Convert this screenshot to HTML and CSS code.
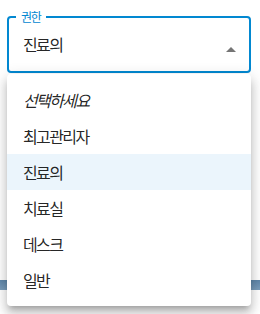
FILE: index.html
```html
<!DOCTYPE html>
<html lang="ko">
<head>
    <meta charset="UTF-8">
    <title>권한 선택</title>
    <link rel="stylesheet" href="styles.css">
</head>
<body>
    <div class="page">
        <!-- 권한 선택 필드 -->
        <fieldset class="field">
            <legend>권한</legend>
            <div class="value">진료의</div>
            <svg class="arrow" width="24" height="24" viewBox="0 0 24 24"><path d="M7 14l5-5 5 5z" fill="#757575"/></svg>
        </fieldset>

        <div class="backdrop-bar"></div>

        <!-- 드롭다운 메뉴 -->
        <ul class="menu">
            <li class="item placeholder">선택하세요</li>
            <li class="item">최고관리자</li>
            <li class="item selected">진료의</li>
            <li class="item">치료실</li>
            <li class="item">데스크</li>
            <li class="item">일반</li>
        </ul>
    </div>
</body>
</html>
```

FILE: styles.css
```css
body {
    margin: 0;
    font-family: "Noto Sans CJK KR", "Noto Sans", sans-serif;
    background: #fff;
}

.page {
    position: relative;
    width: 260px;
    height: 314px;
    overflow: hidden;
}

.field {
    position: relative;
    box-sizing: border-box;
    margin: 10px 9px 0 7px;
    height: 63px;
    padding: 0 0 0 14px;
    border: 2px solid #0288d1;
    border-radius: 4px;
    display: flex;
    align-items: center;
}

.field legend {
    font-size: 12px;
    line-height: 14px;
    letter-spacing: -1.4px;
    color: #0288d1;
    padding: 0 6px 0 5px;
    margin-left: -7px;
}

.value {
    font-size: 16px;
    letter-spacing: -1.6px;
    color: rgba(0, 0, 0, 0.87);
    flex: 1;
    margin-top: -8px;
}

.arrow {
    position: absolute;
    right: 6px;
    top: 14px;
}

.backdrop-bar {
    margin-top: 207px;
    height: 10px;
    background: linear-gradient(#5f87aa, #7c9fbd);
}

.menu {
    position: absolute;
    top: 74px;
    left: 7px;
    width: 244px;
    margin: 0;
    padding: 8px 0;
    list-style: none;
    background: #fff;
    border-radius: 4px;
    box-shadow: 0 5px 5px -3px rgba(0,0,0,0.2), 0 8px 10px 1px rgba(0,0,0,0.14), 0 3px 14px 2px rgba(0,0,0,0.12);
}

.item {
    height: 36px;
    line-height: 36px;
    padding-left: 16px;
    font-size: 16px;
    letter-spacing: -1.6px;
    color: rgba(0, 0, 0, 0.87);
}

.item.placeholder {
    font-style: italic;
}

.item.selected {
    background: #ebf5fc;
}
```
